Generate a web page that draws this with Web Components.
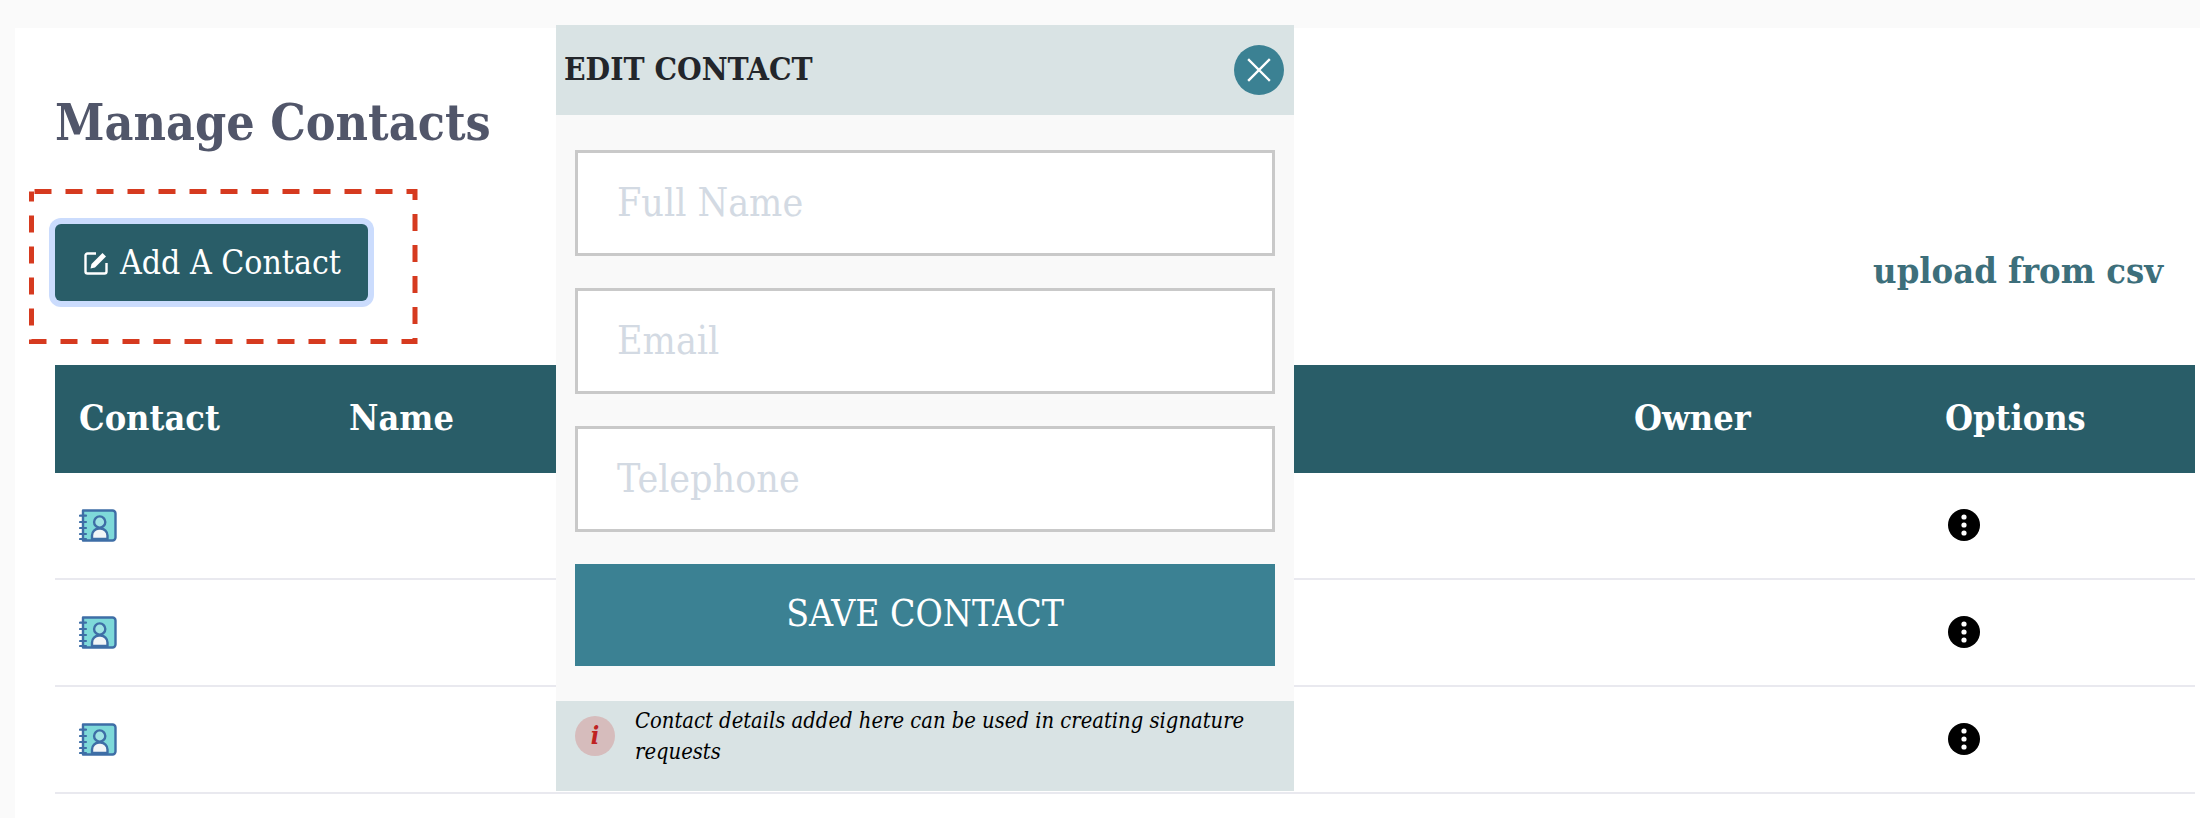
<!DOCTYPE html>
<html>
<head>
<meta charset="utf-8">
<title>Manage Contacts</title>
<style>
    html, body { margin: 0; height: 100%; }
    body {
        background: #fafafa;
        overflow: hidden;
        font-family: 'DejaVu Serif', 'Liberation Serif', serif;
        font-stretch: condensed;
    }
</style>
</head>
<body>
<contacts-page>
    <add-button slot="action">Add A Contact</add-button>
    <a slot="upload">upload from csv</a>
    <contacts-table slot="table"></contacts-table>
    <edit-modal slot="modal"></edit-modal>
</contacts-page>

<script>
class ContactsPage extends HTMLElement {
    constructor() {
        super();
        this.attachShadow({mode: 'open'}).innerHTML = `
            <style>
                :host {
                    display: block;
                    position: relative;
                    margin: 28px 0 0 15px;
                    height: 790px;
                    padding: 65px 5px 0 40px;
                    box-sizing: border-box;
                    background: #fff;
                }
                h1 {
                    margin: 0;
                    font-size: 49.7px;
                    line-height: 60px;
                    font-weight: 700;
                    color: #51566a;
                }
                .toolbar {
                    display: flex;
                    justify-content: space-between;
                    align-items: flex-end;
                    margin-top: 37px;
                    height: 175px;
                    padding: 0 32px 0 0;
                    box-sizing: border-box;
                }
                .left { align-self: flex-start; padding-top: 34px; }
                ::slotted([slot="upload"]) {
                    font-size: 36px;
                    font-weight: 700;
                    color: #3d6f7b;
                    line-height: 40px;
                    margin-bottom: 75px;
                }
                .annotation {
                    position: absolute;
                    left: 14px;
                    top: 161px;
                    pointer-events: none;
                }
                ::slotted([slot="modal"]) {
                    position: absolute;
                    left: 541px;
                    top: -3px;
                }
            </style>
            <h1>Manage Contacts</h1>
            <div class="toolbar">
                <div class="left"><slot name="action"></slot></div>
                <slot name="upload"></slot>
            </div>
            <slot name="table"></slot>
            <svg class="annotation" width="390" height="157">
                <rect x="2.5" y="2.5" width="383.5" height="150" fill="none" stroke="#d63a1f" stroke-width="5" stroke-dasharray="17 14" stroke-dashoffset="-3"/>
            </svg>
            <slot name="modal"></slot>
        `;
    }
}

class AddButton extends HTMLElement {
    constructor() {
        super();
        this.attachShadow({mode: 'open'}).innerHTML = `
            <style>
                :host {
                    display: inline-flex;
                    align-items: center;
                    gap: 12px;
                    width: 313px;
                    height: 77px;
                    box-sizing: border-box;
                    padding-left: 29px;
                    background: #295d68;
                    color: #fff;
                    border-radius: 6px;
                    box-shadow: 0 0 0 6px #cbdcfd;
                    font-size: 33.5px;
                }
                svg { width: 24px; height: 24px; flex: none; }
            </style>
            <svg viewBox="0 0 24 24" fill="none" stroke="#fff">
                <path d="M12 2.500H3.500a2 2 0 0 0-2 2v16a2 2 0 0 0 2 2h17a2 2 0 0 0 2-2V12" stroke-width="2.400"/>
                <path d="M6.500 17.500l1-4.500L18.500 2l3.500 3.500L11 16.500z" fill="#fff" stroke="none"/>
            </svg>
            <slot></slot>
        `;
    }
}

class BookIcon extends HTMLElement {
    constructor() {
        super();
        this.attachShadow({mode: 'open'}).innerHTML = `
            <style>
                :host { display: block; width: 38px; height: 33px; }
                svg { display: block; }
            </style>
            <svg width="38" height="33" viewBox="0 0 38 33">
                <path d="M4 1.500h29.500a3 3 0 0 1 3 3v24a3 3 0 0 1-3 3H4z" fill="#7ed9d9" stroke="#3e6ea6" stroke-width="2.400" stroke-linejoin="round"/>
                <path d="M1 6.700h6M1 13h6M1 19h6M1 25h6M1 30h6" stroke="#3e6ea6" stroke-width="2.200" stroke-linecap="round"/>
                <circle cx="20.700" cy="13" r="5.600" fill="#9fe3e3" stroke="#3e6ea6" stroke-width="2.400"/>
                <path d="M13 30v-3.500a7 7 0 0 1 7-7h1.500a7 7 0 0 1 7 7V30z" fill="#f2f5f7" stroke="#3e6ea6" stroke-width="2.400" stroke-linejoin="round"/>
            </svg>
        `;
    }
}

class DotsIcon extends HTMLElement {
    constructor() {
        super();
        this.attachShadow({mode: 'open'}).innerHTML = `
            <style>
                :host { display: block; width: 32px; height: 32px; }
                svg { display: block; }
            </style>
            <svg width="32" height="32" viewBox="0 0 32 32">
                <circle cx="16" cy="16" r="16" fill="#000"/>
                <circle cx="16" cy="8" r="2.600" fill="#fff"/>
                <circle cx="16" cy="16" r="2.600" fill="#fff"/>
                <circle cx="16" cy="24" r="2.600" fill="#fff"/>
            </svg>
        `;
    }
}

class ContactsTable extends HTMLElement {
    constructor() {
        super();
        const row = `<div class="row"><book-icon></book-icon><span></span><span></span><dots-icon></dots-icon></div>`;
        this.attachShadow({mode: 'open'}).innerHTML = `
            <style>
                :host { display: block; }
                .head, .row {
                    display: grid;
                    grid-template-columns: 270px 1285px 311px 1fr;
                    padding-left: 24px;
                    align-items: center;
                }
                .head {
                    height: 108px;
                    box-sizing: border-box;
                    padding-bottom: 5px;
                    background: #295d68;
                    color: #fff;
                    font-size: 35.8px;
                    font-weight: 700;
                }
                .row {
                    height: 107px;
                    box-sizing: border-box;
                    border-bottom: 2px solid #e9e9ef;
                }
                dots-icon { margin: 0 0 1px 3px; }
            </style>
            <div class="head">
                <span>Contact</span><span>Name</span><span>Owner</span><span>Options</span>
            </div>
            ${row}${row}${row}
        `;
    }
}

class FormField extends HTMLElement {
    constructor() {
        super();
        this.attachShadow({mode: 'open'}).innerHTML = `
            <style>
                :host {
                    display: flex;
                    align-items: center;
                    height: 106px;
                    box-sizing: border-box;
                    padding: 0 0 2px 39px;
                    background: #fff;
                    border: 3px solid #c9c9c9;
                    color: #d3dae3;
                    font-size: 39px;
                }
            </style>
            <slot></slot>
        `;
    }
}

class EditModal extends HTMLElement {
    constructor() {
        super();
        this.attachShadow({mode: 'open'}).innerHTML = `
            <style>
                :host {
                    display: flex;
                    flex-direction: column;
                    width: 738px;
                    height: 766px;
                    background: #f9f9f9;
                }
                header {
                    display: flex;
                    align-items: center;
                    justify-content: space-between;
                    height: 90px;
                    padding: 0 10px 0 8px;
                    background: #d9e3e4;
                    color: #23262b;
                    font-size: 31.5px;
                    font-weight: 700;
                    flex: none;
                }
                header span { padding-bottom: 3px; }
                .close {
                    width: 50px;
                    height: 50px;
                    border-radius: 50%;
                    background: #3b8193;
                    display: flex;
                    align-items: center;
                    justify-content: center;
                }
                .body {
                    flex: 1;
                    display: flex;
                    flex-direction: column;
                    gap: 32px;
                    padding: 35px 19px 0;
                }
                .save {
                    height: 102px;
                    box-sizing: border-box;
                    padding-bottom: 3px;
                    display: flex;
                    align-items: center;
                    justify-content: center;
                    background: #3b8193;
                    color: #fff;
                    font-size: 37px;
                }
                footer {
                    display: flex;
                    align-items: flex-start;
                    gap: 20px;
                    height: 90px;
                    box-sizing: border-box;
                    padding: 4px 19px 0;
                    background: #d9e3e4;
                    color: #000;
                    font-size: 21.8px;
                    font-style: italic;
                    line-height: 31px;
                    flex: none;
                }
                .info {
                    flex: none;
                    width: 40px;
                    height: 40px;
                    margin-top: 11px;
                    border-radius: 50%;
                    background: #d6bcbc;
                    color: #bf2222;
                    display: flex;
                    align-items: center;
                    justify-content: center;
                    font-size: 25px;
                    font-weight: 700;
                    line-height: 40px;
                }
            </style>
            <header>
                <span>EDIT CONTACT</span>
                <div class="close">
                    <svg width="24" height="24" viewBox="0 0 24 24" stroke="#fff" stroke-width="2.400" stroke-linecap="square">
                        <path d="M2 2l20 20M22 2L2 22"/>
                    </svg>
                </div>
            </header>
            <div class="body">
                <form-field>Full Name</form-field>
                <form-field>Email</form-field>
                <form-field>Telephone</form-field>
                <div class="save">SAVE CONTACT</div>
            </div>
            <footer>
                <span class="info">i</span>
                <span>Contact details added here can be used in creating signature requests</span>
            </footer>
        `;
    }
}

customElements.define('add-button', AddButton);
customElements.define('book-icon', BookIcon);
customElements.define('dots-icon', DotsIcon);
customElements.define('contacts-table', ContactsTable);
customElements.define('form-field', FormField);
customElements.define('edit-modal', EditModal);
customElements.define('contacts-page', ContactsPage);
</script>
</body>
</html>
